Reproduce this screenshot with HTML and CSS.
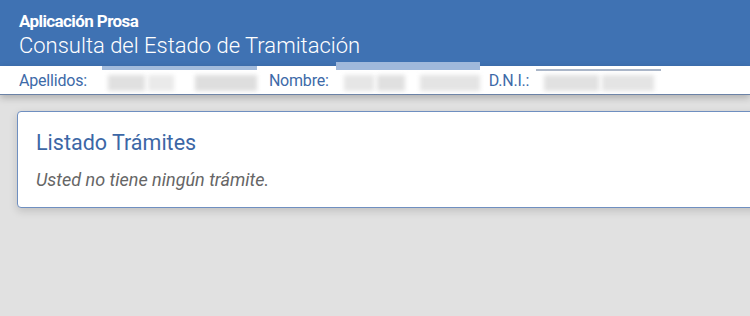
FILE: index.html
```html
<!DOCTYPE html>
<html lang="es">
<head>
<meta charset="utf-8">
<title>Aplicación Prosa</title>
<link rel="stylesheet" href="styles.css">
</head>
<body>
<header class="app-header">
  <div class="app-title">Aplicación Prosa</div>
  <div class="app-subtitle">Consulta del Estado de Tramitación</div>
</header>
<div class="info-bar">
  <div class="field field-apellidos">
    <span class="label">Apellidos:</span>
    <span class="value value-apellidos">
      <span class="blur b1"></span><span class="blur b2"></span><span class="blur b3"></span>
    </span>
  </div>
  <div class="field field-nombre">
    <span class="label">Nombre:</span>
    <span class="value value-nombre">
      <span class="blur b4"></span><span class="blur b5"></span><span class="blur b6"></span>
    </span>
  </div>
  <div class="field field-dni">
    <span class="label">D.N.I.:</span>
    <span class="value value-dni">
      <span class="blur b7"></span><span class="blur b8"></span>
    </span>
  </div>
</div>
<main class="content">
  <section class="card">
    <h2 class="card-title">Listado Trámites</h2>
    <p class="card-text">Usted no tiene ningún trámite.</p>
  </section>
</main>
</body>
</html>
```
FILE: styles.css
```css
html, body {
  margin: 0;
  padding: 0;
}
body {
  background: #e1e1e1;
  font-family: Roboto, "Liberation Sans", Arial, sans-serif;
  overflow: hidden;
  width: 750px;
  height: 316px;
}
.app-header {
  background: #3f72b3;
  color: #ffffff;
  padding: 12px 19px 7px;
  height: 47px;
}
.app-title {
  font-size: 17px;
  font-weight: 700;
  line-height: 18px;
  letter-spacing: -0.6px;
}
.app-subtitle {
  font-size: 22px;
  font-weight: 300;
  line-height: 26px;
  margin-top: 3px;
}
.info-bar {
  display: flex;
  align-items: stretch;
  background: #ffffff;
  height: 28px;
  border-bottom: 1px solid #6b82a6;
  box-shadow: 0 3px 7px rgba(0, 0, 0, 0.22);
  padding-left: 19px;
  position: relative;
}
.field {
  display: flex;
  align-items: stretch;
}
.label {
  font-size: 16px;
  color: #3d6aa8;
  line-height: 28px;
  padding-top: 1px;
  letter-spacing: -0.2px;
}
.value {
  position: relative;
  display: flex;
  align-items: center;
  gap: 3px;
  padding-top: 6px;
}
.value::before {
  content: "";
  position: absolute;
  left: 0;
  right: 0;
  top: 0;
  height: 4px;
  background: #a2bbdc;
}
.value-apellidos {
  margin-left: 15px;
  width: 155px;
}
.value-nombre {
  margin-left: 7px;
  width: 144px;
}
.value-nombre::before {
  top: -4px;
  height: 8px;
  background: #9fb8db;
}
.value-dni {
  margin-left: 7px;
  width: 125px;
}
.value-dni::before {
  top: 3px;
  height: 2px;
  background: #aab6c8;
}
.field-nombre { margin-left: 12px; }
.field-dni { margin-left: 9px; }
.blur {
  display: block;
  height: 16px;
  filter: blur(2.2px);
  background: #e4e4e4;
}
.b1 { width: 40px; margin-left: 6px; background: #e0e0e0; }
.b2 { width: 28px; background: #eaeaea; }
.b3 { width: 66px; margin-left: 18px; background: #dedede; }
.b4 { width: 30px; margin-left: 8px; background: #e6e6e6; }
.b5 { width: 28px; background: #e0e0e0; }
.b6 { width: 60px; margin-left: 12px; background: #e4e4e4; }
.b7 { width: 55px; margin-left: 8px; background: #e1e1e1; }
.b8 { width: 52px; background: #e4e4e4; }
.content {
  padding: 16px 0 0 17px;
}
.card {
  background: #ffffff;
  border: 1px solid #6f8fc0;
  border-radius: 4px;
  box-shadow: 0 3px 8px rgba(0, 0, 0, 0.15);
  margin-right: -30px;
  padding: 18px 18px 16px;
}
.card-title {
  margin: 0;
  font-size: 21.5px;
  font-weight: 400;
  line-height: 26px;
  color: #3c67a6;
}
.card-text {
  margin: 13px 0 0;
  font-size: 18px;
  font-style: italic;
  line-height: 22px;
  color: #666666;
}
```
